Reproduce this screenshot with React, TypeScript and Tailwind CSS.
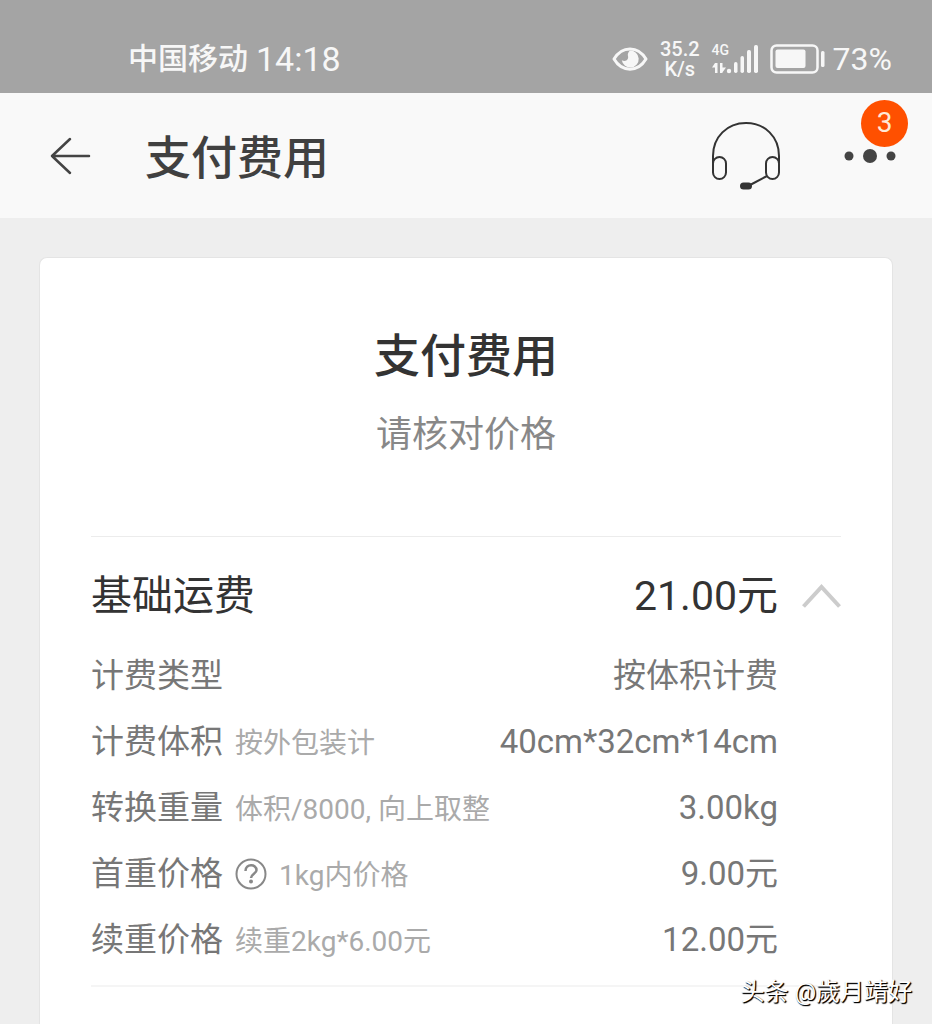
import { useState } from "react";

type FeeRow = {
  label: string;
  value: string;
  note?: string;
  help?: boolean;
};

const feeRows: FeeRow[] = [
  { label: "计费类型", value: "按体积计费" },
  { label: "计费体积", note: "按外包装计", value: "40cm*32cm*14cm" },
  { label: "转换重量", note: "体积/8000, 向上取整", value: "3.00kg" },
  { label: "首重价格", note: "1kg内价格", value: "9.00元", help: true },
  { label: "续重价格", note: "续重2kg*6.00元", value: "12.00元" },
];

function EyeIcon() {
  return (
    <svg viewBox="0 0 36 26" className="h-[26px] w-9" fill="none" aria-hidden>
      <path d="M2 13C10 -0.500 26 -0.500 34 13C26 26.500 10 26.500 2 13Z" stroke="currentColor" strokeWidth={3} strokeLinejoin="round" />
      <path d="M18 4.500a8.500 8.500 0 1 1 -8.200 9.800c2.500 1.700 5.700.5 6.300-2.200c.4-2-1-3.400.2-5.400c.4-.8 1-1.600 1.700-2.200z" fill="currentColor" />
    </svg>
  );
}

/** Up/down traffic arrows followed by the signal bars; leaves room for the 4G tag above. */
function NetworkIcon() {
  return (
    <svg viewBox="0 0 46 30" className="h-[30px] w-[46px]" fill="currentColor" aria-hidden>
      <path d="M3 19h2.500v10H3zM0 23.500L3 19h1v4.500zM8 19h2.500v10H8zM10 29v-5.500h4z" />
      <circle cx="17" cy="27" r="2.200" />
      <rect x="22" y="18" width="3.500" height="11" rx="1.700" />
      <rect x="28.500" y="12" width="3.500" height="17" rx="1.700" />
      <rect x="35" y="6" width="4" height="23" rx="1.700" />
      <rect x="42" y="1" width="4" height="28" rx="1.700" />
    </svg>
  );
}

function BatteryIcon() {
  return (
    <svg viewBox="0 0 55 30" className="h-[30px] w-[55px]" fill="none" aria-hidden>
      <rect x="1.500" y="1.500" width="46" height="27" rx="5" stroke="currentColor" strokeWidth={2.5} />
      <rect x="5.500" y="5.500" width="30" height="18.500" rx="2" fill="currentColor" />
      <rect x="51" y="7" width="3.500" height="16" rx="1.500" fill="currentColor" />
    </svg>
  );
}

function StatusBar() {
  return (
    <div className="flex h-[93px] items-center justify-between bg-[#a4a4a4] pr-10 pl-32 pt-6 text-[#f7f7f7]">
      <div className="flex items-center gap-2 leading-9">
        <span className="text-[30px] font-medium">中国移动</span>
        <span className="text-[34px]">14:18</span>
      </div>
      <div className="flex items-center">
        <EyeIcon />
        <div className="ml-3 text-center text-[20px] leading-5 font-medium">
          <div>35.2</div>
          <div>K/s</div>
        </div>
        <div className="relative ml-3">
          <NetworkIcon />
          <span className="absolute -top-px left-0 text-[14px] leading-[14px] font-medium">4G</span>
        </div>
        <div className="ml-3">
          <BatteryIcon />
        </div>
        <span className="ml-2 text-[32px] leading-9">73%</span>
      </div>
    </div>
  );
}

function HeadsetIcon() {
  return (
    <svg viewBox="0 0 68 68" className="h-[68px] w-[68px]" fill="none" stroke="#333" strokeWidth={2} aria-hidden>
      <path d="M1 41V34C1 15 15 1 34 1S67 15 67 34V41" />
      <rect x="1" y="35" width="13" height="22" rx="6.500" />
      <rect x="54" y="35" width="13" height="22" rx="6.500" />
      <path d="M55 54L39 62.500" />
      <rect x="28" y="60.500" width="12" height="7" rx="3.500" fill="#333" stroke="none" />
    </svg>
  );
}

function NavBar() {
  return (
    <header className="flex h-[125px] items-center bg-[#f9f9f9] pr-9 pl-[50px]">
      <button type="button" aria-label="返回" className="text-[#444]">
        <svg viewBox="0 0 42 38" className="h-[38px] w-[42px]" fill="none" stroke="currentColor" strokeWidth={2.5} strokeLinecap="round" strokeLinejoin="round" aria-hidden>
          <path d="M20 2L2 19L20 36M2 19H39" />
        </svg>
      </button>
      <h1 className="ml-[53px] pt-1 text-[46px] leading-[60px] font-medium text-[#404040]">支付费用</h1>
      <button type="button" aria-label="客服" className="ml-auto">
        <HeadsetIcon />
      </button>
      <button type="button" aria-label="更多" className="relative ml-16">
        <svg viewBox="0 0 52 16" className="h-4 w-[52px]" fill="#444" aria-hidden>
          <circle cx="5" cy="8" r="4.500" />
          <circle cx="26" cy="8" r="7" />
          <circle cx="47" cy="8" r="4.500" />
        </svg>
        <span className="absolute -top-12 -right-3 flex h-[47px] w-[47px] items-center justify-center rounded-full bg-[#ff5000] text-[28px] leading-none text-[#ffe9d6]">
          3
        </span>
      </button>
    </header>
  );
}

function HelpButton() {
  return (
    <button type="button" aria-label="首重价格说明" className="text-[#888]">
      <svg viewBox="0 0 32 32" className="h-8 w-8" fill="none" stroke="currentColor" strokeWidth={2} aria-hidden>
        <circle cx="16" cy="16" r="14.500" />
        <path d="M10.500 13C10.500 5.500 21.500 5.500 21.500 12.200C21.500 15.500 16 16 16 20" strokeWidth={2.500} />
        <circle cx="16" cy="23.500" r="2" fill="currentColor" stroke="none" />
      </svg>
    </button>
  );
}

function FeeLine({ label, value, note, help }: FeeRow) {
  return (
    <div className="flex h-[66px] items-center justify-between text-[33px] leading-10 text-[#777]">
      <dt className="flex items-center gap-3">
        <span>{label}</span>
        {help ? <HelpButton /> : null}
        {note ? <span className="pt-1 text-[28px] text-[#aaa]">{note}</span> : null}
      </dt>
      <dd>{value}</dd>
    </div>
  );
}

export default function App() {
  const [open, setOpen] = useState(true);

  return (
    <div className="relative flex min-h-screen flex-col bg-[#eee] font-[Roboto,'Noto_Sans_CJK_SC',sans-serif]">
      <StatusBar />
      <NavBar />
      <main className="mx-[39px] mt-[39px] flex-1 rounded-t-lg border border-b-0 border-[#e4e4e4] bg-white px-[51px]">
        <div className="pt-[68px] text-center">
          <h2 className="text-[46px] leading-[60px] font-medium text-[#333]">支付费用</h2>
          <p className="mt-6 text-[36px] leading-[50px] text-[#888]">请核对价格</p>
        </div>

        <section className="mt-[76px] border-t border-[#ececec] pb-3">
          <div className="flex h-[106px] items-center pt-3 text-[41px] leading-[54px] text-[#333]">
            <h3>基础运费</h3>
            <span className="ml-auto">21.00元</span>
            <button
              type="button"
              aria-label="展开或收起"
              aria-expanded={open}
              onClick={() => setOpen(!open)}
              className={open ? "ml-6" : "ml-6 rotate-180"}
            >
              <svg viewBox="0 0 39 24" className="h-6 w-[39px]" fill="none" stroke="#ccc" strokeWidth={4} aria-hidden>
                <path d="M1.500 22.500L19.500 3L37.500 22.500" />
              </svg>
            </button>
          </div>
          {open ? (
            <dl className="pr-[63px]">
              {feeRows.map((row) => (
                <FeeLine key={row.label} {...row} />
              ))}
            </dl>
          ) : null}
        </section>
        <hr className="border-t-2 border-[#f5f5f5]" />
      </main>

      <div className="absolute right-5 bottom-4 text-[24px] leading-8 text-white [text-shadow:1px_1px_1px_#000,1px_1px_1px_#000]">
        头条 @歲月靖好
      </div>
    </div>
  );
}
